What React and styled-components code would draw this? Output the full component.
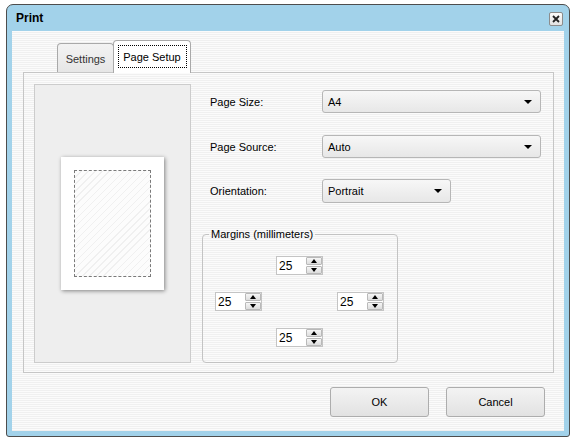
import React from "react";
import styled, { createGlobalStyle } from "styled-components";

const Global = createGlobalStyle`
  html, body { margin: 0; padding: 0; background: #ffffff; }
  body { font-family: "Liberation Sans", Arial, sans-serif; font-size: 11px; color: #000; }
  * { box-sizing: border-box; }
`;

const stripes = `repeating-linear-gradient(to bottom, #fbfbfb 0px, #fbfbfb 1px, #f0f0f0 1px, #f0f0f0 2px)`;

const Window = styled.div`
  margin: 4px 0 0 6px;
  width: 564px;
  height: 433px;
  border: 1px solid #4d4d4d;
  border-radius: 7px 7px 3px 3px;
  background: #a2d2ea;
  padding: 0 5px 5px 5px;
  display: flex;
  flex-direction: column;
`;

const TitleBar = styled.div`
  height: 26px;
  display: flex;
  align-items: center;
  justify-content: space-between;
  padding: 0 1px 0 4px;
`;

const Title = styled.span`
  font-weight: bold;
  font-size: 12px;
  color: #000;
`;

const CloseButton = styled.button`
  width: 14px;
  height: 14px;
  padding: 0;
  border: 1px solid #8c8c8c;
  border-radius: 2px;
  background: linear-gradient(#fbfbfb, #e2e2e2);
  display: flex;
  align-items: center;
  justify-content: center;
  margin-top: 1px;
`;

const Client = styled.div`
  flex: 1;
  background: ${stripes};
  padding: 9px 10px 0 11px;
  display: flex;
  flex-direction: column;
`;

const TabStrip = styled.div`
  display: flex;
  align-items: flex-end;
  padding-left: 34px;
  height: 32px;
`;

const Tab = styled.div`
  position: relative;
  z-index: ${(p) => (p.$active ? 1 : 0)};
  height: ${(p) => (p.$active ? "33px" : "29px")};
  margin-bottom: ${(p) => (p.$active ? "-1px" : "0")};
  width: ${(p) => p.$w}px;
  border: 1px solid #a9a9a9;
  border-bottom: none;
  border-radius: 4px 4px 0 0;
  background: ${(p) => (p.$active ? "#ffffff" : "linear-gradient(#f3f3f3, #e6e6e6)")};
  color: ${(p) => (p.$active ? "#000" : "#333")};
  display: flex;
  align-items: ${(p) => (p.$active ? "flex-start" : "center")};
  justify-content: center;
  padding-top: ${(p) => (p.$active ? "4px" : "1px")};
  font-size: 11px;
  margin-left: ${(p) => (p.$active ? "-1px" : "0")};
`;

const FocusRect = styled.span`
  width: 69px;
  height: 23px;
  border: 1px dotted #000;
  display: flex;
  align-items: center;
  justify-content: center;
`;

const Pane = styled.div`
  height: 301px;
  border: 1px solid #c6c6c6;
  background: ${stripes};
  padding: 11px 10px 9px 10px;
  display: flex;
  gap: 11px;
`;

const Preview = styled.div`
  width: 157px;
  height: 279px;
  background: #eeeeee;
  border: 1px solid #cccccc;
  display: flex;
  align-items: center;
  justify-content: center;
`;

const Paper = styled.div`
  width: 103px;
  height: 133px;
  background: #ffffff;
  box-shadow: 1px 1px 4px rgba(0, 0, 0, 0.45);
  padding: 13px;
`;

const PrintArea = styled.div`
  width: 100%;
  height: 100%;
  border: 1px dashed #7a7a7a;
  background: repeating-linear-gradient(135deg, #fcfcfc 0px, #fcfcfc 4px, #f0f0f0 4px, #f0f0f0 5px);
`;

const Form = styled.div`
  flex: 1;
  padding-top: 6px;
  display: flex;
  flex-direction: column;
`;

const Row = styled.div`
  display: flex;
  align-items: center;
  padding-left: 8px;
  margin-bottom: ${(p) => p.$mb}px;
`;

const Label = styled.span`
  width: 112px;
  color: #000;
`;

const Select = styled.div`
  width: ${(p) => p.$w}px;
  height: ${(p) => p.$h || 23}px;
  border: 1px solid #b6b6b6;
  border-radius: 3px;
  background: linear-gradient(#f7f7f7, #e7e7e7);
  display: flex;
  align-items: center;
  justify-content: space-between;
  padding: 0 8px 0 5px;
`;

const Arrow = styled.span`
  width: 0;
  height: 0;
  border-left: 4px solid transparent;
  border-right: 4px solid transparent;
  border-top: 4px solid #000;
`;

const Fieldset = styled.fieldset`
  margin: 25px 0 0 0;
  width: 196px;
  height: 135px;
  border: 1px solid #c3c3c3;
  border-radius: 4px;
  padding: 16px 0 0 12px;
`;

const Legend = styled.legend`
  padding: 0 2px;
  margin-left: -6px;
  color: #000;
`;

const MarginGrid = styled.div`
  display: grid;
  grid-template-columns: 47px 47px 47px;
  grid-template-rows: 19px 19px 19px;
  column-gap: 14px;
  row-gap: 17px;
`;

const Spinner = styled.div`
  grid-column: ${(p) => p.$col};
  grid-row: ${(p) => p.$row};
  width: 47px;
  height: 19px;
  border: 1px solid #c4c4c4;
  background: #ffffff;
  display: flex;
`;

const SpinValue = styled.span`
  flex: 1;
  padding-left: 2px;
  display: flex;
  align-items: center;
  font-size: 12px;
`;

const SpinButtons = styled.div`
  width: 17px;
  display: flex;
  flex-direction: column;
  gap: 1px;
  padding: 0 0 0 1px;
`;

const SpinBtn = styled.div`
  flex: 1;
  border: 1px solid #b9b9b9;
  border-radius: 1px;
  background: linear-gradient(#f6f6f6, #dddddd);
  display: flex;
  align-items: center;
  justify-content: center;
`;

const Tri = styled.span`
  width: 0;
  height: 0;
  border-left: 3.5px solid transparent;
  border-right: 3.5px solid transparent;
  ${(p) => (p.$up ? "border-bottom: 4px solid #000;" : "border-top: 4px solid #000;")}
`;

const ButtonRow = styled.div`
  display: flex;
  justify-content: flex-end;
  gap: 17px;
  padding-right: 9px;
  margin-top: 14px;
`;

const Button = styled.button`
  width: 99px;
  height: 30px;
  border: 1px solid #adadad;
  border-radius: 3px;
  background: linear-gradient(#f3f3f3, #e2e2e2);
  font-family: "Liberation Sans", Arial, sans-serif;
  font-size: 11px;
  color: #000;
  padding: 0;
`;

function Spin({ col, row, value }) {
  return (
    <Spinner $col={col} $row={row}>
      <SpinValue>{value}</SpinValue>
      <SpinButtons>
        <SpinBtn><Tri $up /></SpinBtn>
        <SpinBtn><Tri /></SpinBtn>
      </SpinButtons>
    </Spinner>
  );
}

export default function App() {
  return (
    <>
      <Global />
      <Window>
        <TitleBar>
          <Title>Print</Title>
          <CloseButton aria-label="Close">
            <svg width="8" height="8" viewBox="0 0 8 8">
              <path d="M1 1 L7 7 M7 1 L1 7" stroke="#222" strokeWidth="1.8" />
            </svg>
          </CloseButton>
        </TitleBar>
        <Client>
          <TabStrip>
            <Tab $w={57}>Settings</Tab>
            <Tab $w={78} $active>
              <FocusRect>Page Setup</FocusRect>
            </Tab>
          </TabStrip>
          <Pane>
            <Preview>
              <Paper>
                <PrintArea />
              </Paper>
            </Preview>
            <Form>
              <Row $mb={22}>
                <Label>Page Size:</Label>
                <Select $w={219}>A4<Arrow /></Select>
              </Row>
              <Row $mb={21}>
                <Label>Page Source:</Label>
                <Select $w={219}>Auto<Arrow /></Select>
              </Row>
              <Row $mb={0}>
                <Label>Orientation:</Label>
                <Select $w={129} $h={24}>Portrait<Arrow /></Select>
              </Row>
              <Fieldset>
                <Legend>Margins (millimeters)</Legend>
                <MarginGrid>
                  <Spin col={2} row={1} value="25" />
                  <Spin col={1} row={2} value="25" />
                  <Spin col={3} row={2} value="25" />
                  <Spin col={2} row={3} value="25" />
                </MarginGrid>
              </Fieldset>
            </Form>
          </Pane>
          <ButtonRow>
            <Button>OK</Button>
            <Button>Cancel</Button>
          </ButtonRow>
        </Client>
      </Window>
    </>
  );
}
